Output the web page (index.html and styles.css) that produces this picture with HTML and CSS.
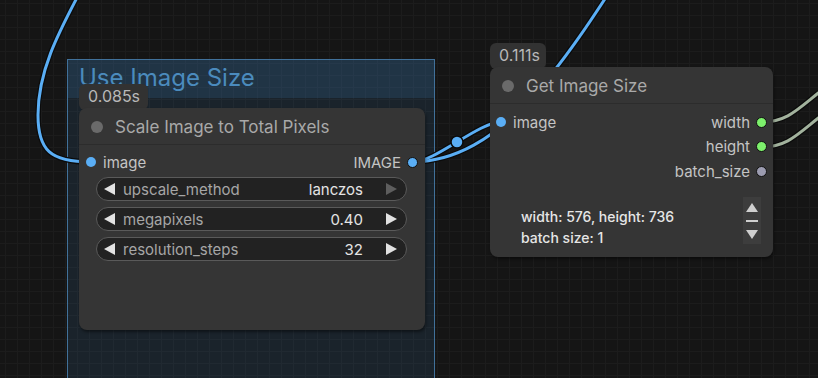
FILE: index.html
```html
<!DOCTYPE html>
<html lang="en">
  <head>
    <meta charset="UTF-8">
    <title>Use Image Size</title>
    <link rel="stylesheet" href="styles.css">
  </head>
  <body>
    <div class="canvas">
      <div class="group">
        <div class="group-title">Use Image Size</div>
      </div>

      <svg class="links" width="818" height="378" viewBox="0 0 818 378">
        <g class="link-shadow">
          <path d="M80,-8 C60,30 38,70 38,115 C38,150 50,162 91,162"/>
          <path d="M413,162 C435,162 479,122 501,122"/>
          <path d="M413,162 C500,160 560,70 630,-40"/>
          <path d="M762,122 C790,122 800,106 830,84"/>
          <path d="M762,147 C790,147 800,131 830,109"/>
        </g>
        <g class="link-blue">
          <path d="M80,-8 C60,30 38,70 38,115 C38,150 50,162 91,162"/>
          <path d="M413,162 C435,162 479,122 501,122"/>
          <path d="M413,162 C500,160 560,70 630,-40"/>
        </g>
        <g class="link-int">
          <path d="M762,122 C790,122 800,106 830,84"/>
          <path d="M762,147 C790,147 800,131 830,109"/>
        </g>
        <circle class="link-mid" cx="457" cy="142" r="6"/>
      </svg>

      <div class="badge badge-scale">0.085s</div>
      <div class="node node-scale">
        <div class="node-title">
          <span class="node-dot"></span>
          <span>Scale Image to Total Pixels</span>
        </div>
        <div class="node-body">
          <div class="slot-row">
            <div class="slot"><span class="pin pin-image"></span>image</div>
            <div class="slot slot-out">IMAGE<span class="pin pin-image pin-ring"></span></div>
          </div>
          <div class="widgets">
            <div class="widget">
              <svg class="arrow" width="11" height="12" viewBox="0 0 11 12"><path d="M11,0 L0,6 L11,12 Z"/></svg>
              <span class="widget-label">upscale_method</span>
              <span class="widget-value">lanczos</span>
              <svg class="arrow arrow-dim" width="11" height="12" viewBox="0 0 11 12"><path d="M0,0 L11,6 L0,12 Z"/></svg>
            </div>
            <div class="widget">
              <svg class="arrow" width="11" height="12" viewBox="0 0 11 12"><path d="M11,0 L0,6 L11,12 Z"/></svg>
              <span class="widget-label">megapixels</span>
              <span class="widget-value">0.40</span>
              <svg class="arrow" width="11" height="12" viewBox="0 0 11 12"><path d="M0,0 L11,6 L0,12 Z"/></svg>
            </div>
            <div class="widget">
              <svg class="arrow" width="11" height="12" viewBox="0 0 11 12"><path d="M11,0 L0,6 L11,12 Z"/></svg>
              <span class="widget-label">resolution_steps</span>
              <span class="widget-value">32</span>
              <svg class="arrow" width="11" height="12" viewBox="0 0 11 12"><path d="M0,0 L11,6 L0,12 Z"/></svg>
            </div>
          </div>
        </div>
      </div>

      <div class="badge badge-size">0.111s</div>
      <div class="node node-size">
        <div class="node-title">
          <span class="node-dot"></span>
          <span>Get Image Size</span>
        </div>
        <div class="node-body">
          <div class="slot-row">
            <div class="slot"><span class="pin pin-image"></span>image</div>
            <div class="slot slot-out">width<span class="pin pin-int"></span></div>
          </div>
          <div class="slot-row slot-row-end">
            <div class="slot slot-out">height<span class="pin pin-int"></span></div>
          </div>
          <div class="slot-row slot-row-end">
            <div class="slot slot-out">batch_size<span class="pin pin-batch"></span></div>
          </div>
          <div class="display">
            <div class="display-text">
              <div>width: 576, height: 736</div>
              <div>batch size: 1</div>
            </div>
            <div class="scroller">
              <svg width="12" height="9" viewBox="0 0 12 9"><path d="M6,0 L12,9 L0,9 Z"/></svg>
              <span class="scroller-bar"></span>
              <svg width="12" height="9" viewBox="0 0 12 9"><path d="M0,0 L12,0 L6,9 Z"/></svg>
            </div>
          </div>
        </div>
      </div>
    </div>
  </body>
</html>
```

FILE: styles.css
```css
:root {
  --canvas-bg: #151515;
  --grid-line: #1c1c1c;
  --node-bg: #353535;
  --node-title: #a9a9a9;
  --slot-text: #c4c4c4;
  --link-blue: #5aaef5;
  --link-int: #a2b29d;
  --pin-int: #7df06c;
}

* {
  box-sizing: border-box;
}

body {
  margin: 0;
  font-family: Inter, 'Noto Sans', sans-serif;
  background: var(--canvas-bg);
  overflow: hidden;
}

.canvas {
  position: relative;
  width: 818px;
  height: 378px;
  background-color: var(--canvas-bg);
  background-image:
    linear-gradient(to right, var(--grid-line) 1px, transparent 1px),
    linear-gradient(to bottom, var(--grid-line) 1px, transparent 1px);
  background-size: 12px 12px;
  background-position: 5px 3px;
  overflow: hidden;
}

/* group */
.group {
  position: absolute;
  left: 67px;
  top: 59px;
  width: 368px;
  height: 340px;
  border: 1px solid #41719a;
  background: rgba(60, 120, 175, 0.14);
}

.group-title {
  height: 38px;
  padding-left: 11px;
  background: rgba(60, 120, 175, 0.2);
  color: #4b8bbd;
  font-size: 24px;
  line-height: 36px;
}

/* links */
.links {
  position: absolute;
  left: 0;
  top: 0;
}

.links path {
  fill: none;
  stroke-linecap: round;
}

.link-shadow path {
  stroke: #0b0b0b;
  stroke-width: 5.5;
}

.link-blue path {
  stroke: var(--link-blue);
  stroke-width: 3;
}

.link-int path {
  stroke: var(--link-int);
  stroke-width: 3;
}

.link-mid {
  fill: var(--link-blue);
  stroke: #0b0b0b;
  stroke-width: 1.5;
}

/* nodes */
.badge {
  position: absolute;
  height: 26px;
  padding: 2px 0 0 9px;
  border-radius: 6px;
  background: #323232;
  color: #b8b8b8;
  font-size: 16px;
  line-height: 20px;
}

.badge-scale {
  left: 79px;
  top: 84px;
  width: 69px;
}

.badge-size {
  left: 490px;
  top: 43px;
  width: 56px;
}

.node {
  position: absolute;
  background: var(--node-bg);
  border-radius: 8px;
  box-shadow: 1px 2px 3px rgba(0, 0, 0, 0.45);
}

.node-scale {
  left: 79px;
  top: 108px;
  width: 346px;
  height: 222px;
}

.node-size {
  left: 490px;
  top: 67px;
  width: 283px;
  height: 190px;
}

.node-title {
  display: flex;
  align-items: center;
  gap: 12px;
  height: 37px;
  padding: 1px 0 0 12px;
  border-bottom: 1px solid #2c2c2c;
  color: var(--node-title);
  font-size: 17px;
}

.node-dot {
  width: 12px;
  height: 12px;
  border-radius: 50%;
  background: #6a6a6a;
}

.node-body {
  padding-top: 5px;
}

.node-size .node-body {
  padding-top: 6px;
}

.slot-row {
  display: flex;
  justify-content: space-between;
  align-items: center;
  height: 24px;
  padding: 0 7px;
  color: var(--slot-text);
  font-size: 15px;
}

.node-size .slot-row {
  padding: 0 6px;
  height: 24.5px;
}

.slot-row-end {
  justify-content: flex-end;
}

.slot {
  display: flex;
  align-items: center;
  gap: 7px;
}

.slot-out {
  gap: 6px;
}

.pin {
  width: 10px;
  height: 10px;
  border-radius: 50%;
}

.pin-image {
  background: var(--link-blue);
}

.pin-ring,
.pin-int,
.pin-batch {
  border: 1.5px solid #111;
  width: 11px;
  height: 11px;
}

.pin-int {
  background: var(--pin-int);
}

.pin-batch {
  background: #9c9cb0;
}

/* widgets */
.widgets {
  display: flex;
  flex-direction: column;
  gap: 6px;
  margin-top: 3px;
  padding: 0 18px 0 17px;
}

.widget {
  display: flex;
  align-items: center;
  height: 24px;
  padding: 0 9px 0 7px;
  border: 1px solid #5a5a5a;
  border-radius: 12px;
  background: #222;
  font-size: 15px;
}

.arrow {
  fill: #e2e2e2;
  flex: none;
}

.arrow-dim {
  fill: #5e5e5e;
}

.widget-label {
  flex: 1;
  margin-left: 8px;
  color: #a6a6a6;
}

.widget-value {
  margin-right: 23px;
  color: #e4e4e4;
}

/* display widget */
.display {
  display: flex;
  justify-content: space-between;
  align-items: flex-start;
  padding: 13px 12px 0 31px;
}

.display-text {
  padding-top: 9px;
  color: #e6e6e6;
  font-size: 14px;
  font-weight: 500;
  line-height: 21px;
}

.scroller {
  display: flex;
  flex-direction: column;
  align-items: center;
  justify-content: space-between;
  width: 18px;
  height: 47px;
  padding: 6px 0 5px;
  background: #3d3d3d;
}

.scroller svg {
  fill: #cfcfcf;
}

.scroller-bar {
  width: 12px;
  height: 2px;
  background: #cfcfcf;
}
```
